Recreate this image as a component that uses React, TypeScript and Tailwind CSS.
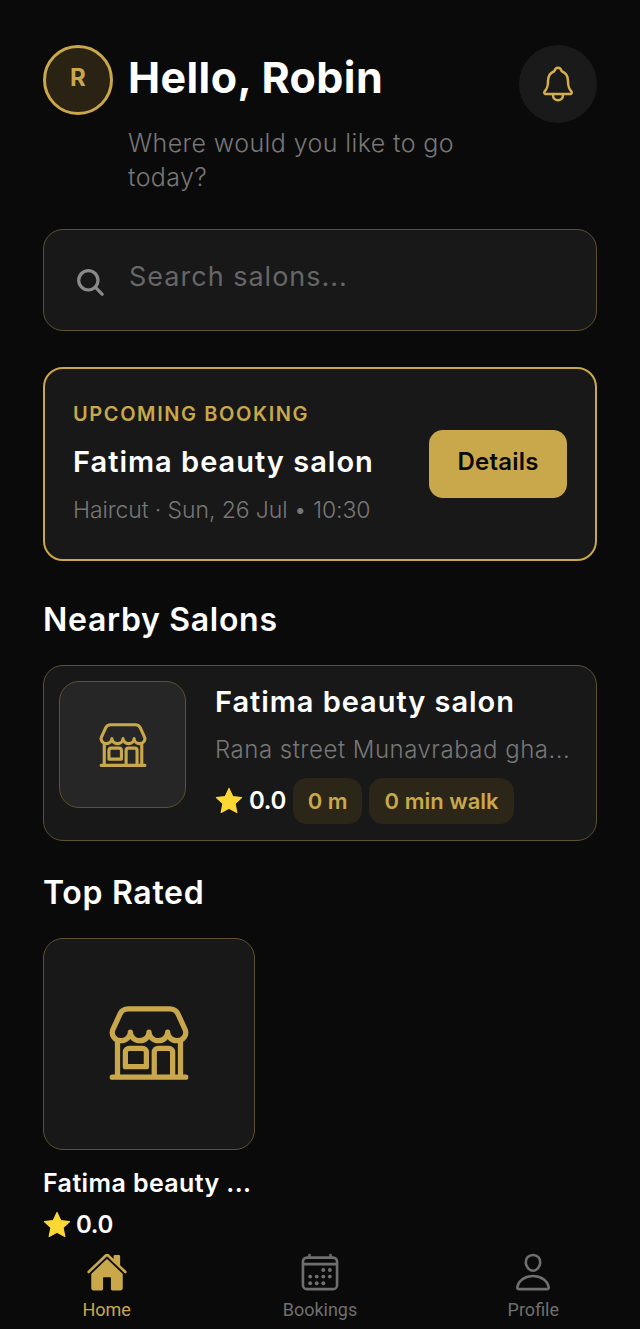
import React from 'react';
import {
    IoCalendarOutline,
    IoHome,
    IoNotificationsOutline,
    IoPersonOutline,
    IoSearch,
    IoStorefrontOutline,
} from 'react-icons/io5';

const Star = ({ className }: { className: string }) => (
    <svg viewBox="0 0 24 24" className={className}>
        <path
            d="M12 1.2l3.2 7 7.6.9-5.6 5.2 1.5 7.5L12 18.1l-6.7 3.7 1.5-7.5L1.2 9.1l7.6-.9z"
            fill="#fdd835"
            stroke="#fdd835"
            strokeWidth="1"
            strokeLinejoin="round"
        />
    </svg>
);

const navItems = [
    { label: 'Home', icon: IoHome, active: true },
    { label: 'Bookings', icon: IoCalendarOutline, active: false },
    { label: 'Profile', icon: IoPersonOutline, active: false },
];

const App = () => {
    return (
        <div className="w-[640px] h-[1329px] overflow-hidden flex flex-col bg-[#0a0a0a] font-['Inter',sans-serif] text-white">
            <main className="flex-1 min-h-0 px-[43px] pt-[45px]">
                {/* Header */}
                <div className="flex justify-between">
                    <div>
                        <div className="flex items-center gap-[15px] h-[70px]">
                            <div className="w-[70px] h-[70px] rounded-full border-[3px] border-[#c9a84c] bg-[#2a2213] flex items-center justify-center text-[#c9a84c] text-[24px] font-bold pb-[4px]">
                                R
                            </div>
                            <h1 className="text-[43px] font-bold leading-none tracking-[0.4px] mb-[6px]">Hello, Robin</h1>
                        </div>
                        <p className="ml-[85px] mt-[11px] w-[350px] text-[25px] leading-[34px] font-light tracking-[0.4px] text-[#777777]">
                            Where would you like to go today?
                        </p>
                    </div>
                    <button className="w-[78px] h-[78px] rounded-full bg-[#1a1a1a] flex items-center justify-center text-[#d4af4a]">
                        <IoNotificationsOutline className="w-[40px] h-[40px]" />
                    </button>
                </div>

                {/* Search */}
                <div className="mt-[35px] h-[102px] rounded-[20px] border-[1.5px] border-[#5f5130] bg-[#181818] flex items-center pl-[30px] gap-[22px]">
                    <IoSearch className="w-[33px] h-[33px] mt-[5px] text-[#8a8a8a]" />
                    <span className="text-[27px] tracking-[1px] text-[#666666] mb-[6px]">Search salons...</span>
                </div>

                {/* Upcoming booking */}
                <div className="mt-[36px] h-[194px] rounded-[20px] border-2 border-[#c9a84c] bg-[#181818] flex items-center justify-between pl-[28px] pr-[28px]">
                    <div className="mb-[4px]">
                        <div className="text-[20px] font-semibold tracking-[1.6px] leading-[28px] text-[#c9a84c]">UPCOMING BOOKING</div>
                        <div className="mt-[17px] text-[29px] font-semibold tracking-[1px] leading-[34px]">Fatima beauty salon</div>
                        <div className="mt-[16px] text-[23px] leading-[30px] font-light tracking-[-0.1px] text-[#777777]">Haircut · Sun, 26 Jul • 10:30</div>
                    </div>
                    <button className="w-[138px] h-[68px] rounded-[14px] bg-[#c9a84c] text-[#0a0a0a] text-[24px] font-semibold tracking-[0.2px] pb-[4px]">
                        Details
                    </button>
                </div>

                {/* Nearby */}
                <h2 className="mt-[39px] text-[32px] font-semibold tracking-[0.7px] leading-[40px]">Nearby Salons</h2>
                <div className="mt-[25px] h-[176px] rounded-[20px] border-[1.5px] border-[#5f5130] bg-[#181818] flex items-start pl-[15px] pt-[15px] gap-[29px]">
                    <div className="w-[127px] h-[127px] shrink-0 rounded-[20px] border-[1.5px] border-[#5f5130] bg-[#262626] flex items-center justify-center text-[#c9a84c]">
                        <IoStorefrontOutline className="w-[50px] h-[50px]" />
                    </div>
                    <div className="min-w-0 flex-1 pr-[24px] pt-[3px]">
                        <div className="text-[29px] font-semibold tracking-[0.95px] leading-[36px]">Fatima beauty salon</div>
                        <div className="mt-[14px] text-[24px] tracking-[0.5px] leading-[32px] font-light text-[#777777] whitespace-nowrap">
                            Rana street Munavrabad gha...
                        </div>
                        <div className="mt-[12px] flex items-center">
                            <Star className="w-[28px] h-[28px]" />
                            <span className="ml-[6px] text-[24px] font-semibold tracking-[-0.3px]">0.0</span>
                            <span className="ml-[7px] h-[46px] w-[69px] justify-center rounded-[14px] bg-[#2c2618] text-[#c9a84c] text-[22px] font-semibold flex items-center">
                                0 m
                            </span>
                            <span className="ml-[7px] h-[46px] w-[145px] justify-center rounded-[14px] bg-[#2c2618] text-[#c9a84c] text-[22px] font-semibold flex items-center">
                                0 min walk
                            </span>
                        </div>
                    </div>
                </div>

                {/* Top rated */}
                <h2 className="mt-[32px] text-[32px] font-semibold tracking-[0.7px] leading-[40px]">Top Rated</h2>
                <div className="mt-[25px] w-[212px] h-[212px] rounded-[20px] border-[1.5px] border-[#5f5130] bg-[#181818] flex items-center justify-center text-[#c9a84c]">
                    <IoStorefrontOutline className="w-[84px] h-[84px] mb-[2px]" />
                </div>
                <div className="mt-[17px] whitespace-nowrap text-[25px] font-semibold tracking-[0.4px] leading-[32px]">Fatima beauty ...</div>
                <div className="mt-[11px] flex items-center">
                    <Star className="w-[28px] h-[28px]" />
                    <span className="ml-[5px] text-[24px] font-semibold tracking-[-0.3px] leading-[30px]">0.0</span>
                </div>
            </main>

            {/* Bottom nav */}
            <nav className="h-[87px] shrink-0 grid grid-cols-3 font-['Roboto',sans-serif]">
                {navItems.map((item) => (
                    <div
                        key={item.label}
                        className={`flex flex-col items-center ${item.active ? 'text-[#c9a84c]' : 'text-[#6f6f6f]'}`}
                    >
                        <item.icon className="w-[42px] h-[42px] mt-[9px]" />
                        <span className="mt-[6px] text-[18px] leading-[22px]">{item.label}</span>
                    </div>
                ))}
            </nav>
        </div>
    );
};

export default App;
